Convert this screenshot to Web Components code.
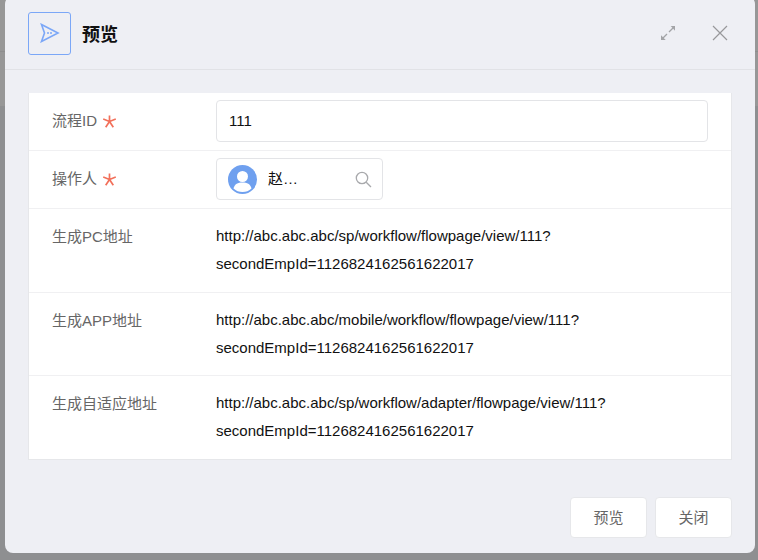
<!DOCTYPE html>
<html lang="zh">
<head>
<meta charset="utf-8">
<title>预览</title>
<style>
  html, body { margin: 0; height: 100%; }
  body {
    background: linear-gradient(#979797 0 51px, #8e8e8e 51px 52px, #979797 52px 106px, #8e8f91 106px);
    overflow: hidden;
    font-family: "Liberation Sans", "Noto Sans CJK SC", sans-serif;
    font-size: 15px;
  }
</style>
</head>
<body>
<preview-dialog heading="预览">
  <form-row label="流程ID" required compact><text-box value="111"></text-box></form-row>
  <form-row label="操作人" required compact><person-picker name="赵…"></person-picker></form-row>
  <form-row label="生成PC地址">http://abc.abc.abc/sp/workflow/flowpage/view/111?<br>secondEmpId=1126824162561622017</form-row>
  <form-row label="生成APP地址">http://abc.abc.abc/mobile/workflow/flowpage/view/111?<br>secondEmpId=1126824162561622017</form-row>
  <form-row label="生成自适应地址" last>http://abc.abc.abc/sp/workflow/adapter/flowpage/view/111?<br>secondEmpId=1126824162561622017</form-row>
  <plain-button slot="footer">预览</plain-button>
  <plain-button slot="footer">关闭</plain-button>
</preview-dialog>

<script>
class PreviewDialog extends HTMLElement {
    constructor() {
        super();
        this.attachShadow({mode: "open"});
        this.shadowRoot.innerHTML = `
            <style>
                :host {
                    position: absolute;
                    left: 5px;
                    top: -4px;
                    width: 750px;
                    height: 557px;
                    display: flex;
                    flex-direction: column;
                    box-sizing: border-box;
                    background: #eeeff4;
                    border-radius: 8px;
                }
                .head {
                    height: 74px;
                    box-sizing: border-box;
                    padding: 1px 23px 0 23px;
                    border-bottom: 1px solid #e1e2e6;
                    display: flex;
                    align-items: center;
                    gap: 11px;
                }
                .logo {
                    width: 43px;
                    height: 43px;
                    box-sizing: border-box;
                    border: 1px solid #7ba7f7;
                    border-radius: 3px;
                    display: flex;
                    align-items: center;
                    justify-content: center;
                }
                h1 {
                    flex: 1;
                    margin: 0;
                    font-size: 18px;
                    font-weight: bold;
                    color: #111;
                }
                .tools { display: flex; align-items: center; gap: 36px; margin-right: 4px; }
                svg { display: block; }
                .card {
                    margin: 23px 23px 0 23px;
                    background: #fff;
                    border: solid #e6e7ea;
                    border-width: 0 1px 1px 1px;
                    display: flex;
                    flex-direction: column;
                }
                .foot {
                    margin-top: 37px;
                    padding-right: 23px;
                    display: flex;
                    justify-content: flex-end;
                    gap: 8px;
                }
            </style>
            <div class="head">
                <div class="logo">
                    <svg width="20" height="20" viewBox="0 0 20 20" fill="none" stroke="#7ba7f7" stroke-width="1.6">
                        <path d="M1.5 1.5 L18 10 L1.5 18.5 L4.5 10 Z"/>
                        <circle cx="8" cy="10" r="1" fill="#7ba7f7" stroke="none"/>
                        <circle cx="11" cy="10" r="1" fill="#7ba7f7" stroke="none"/>
                    </svg>
                </div>
                <h1></h1>
                <div class="tools">
                    <svg width="16" height="16" viewBox="0 0 16 16" fill="none" stroke="#a3a4a7" stroke-width="1.3">
                        <path d="M3 13 L7 9 M9 7 L13 3"/>
                        <path d="M10.7 1 H15 V5.7 Z" fill="#a3a4a7" stroke="none"/>
                        <path d="M1 10.3 V15 H5.7 Z" fill="#a3a4a7" stroke="none"/>
                    </svg>
                    <svg width="16" height="16" viewBox="0 0 16 16" fill="none" stroke="#97989b" stroke-width="1.2">
                        <path d="M1 1 L15 15 M15 1 L1 15"/>
                    </svg>
                </div>
            </div>
            <div class="card"><slot></slot></div>
            <div class="foot"><slot name="footer"></slot></div>
        `;
    }

    connectedCallback() {
        this.shadowRoot.querySelector('h1').textContent = this.getAttribute('heading');
    }
}

class FormRow extends HTMLElement {
    constructor() {
        super();
        this.attachShadow({mode: "open"});
        this.shadowRoot.innerHTML = `
            <style>
                :host {
                    display: flex;
                    box-sizing: border-box;
                    border-bottom: 1px solid #f0f0f2;
                    padding: 13px 23px 13px 23px;
                    color: #111;
                    line-height: 28px;
                    min-height: 83.5px;
                }
                :host([compact]) {
                    align-items: center;
                    height: 58px;
                    min-height: 0;
                    padding-top: 0;
                    padding-bottom: 1px;
                }
                :host([last]) { border-bottom: 0; min-height: 83px; }
                .label { width: 164px; flex: none; color: #666; display: flex; align-items: center; height: 28px; padding-top: 1px; }
                :host([compact]) .label { padding-top: 0; }
                .star { display: block; margin: 1px 0 0 6px; }
                .value { flex: 1; }
            </style>
            <div class="label"><span class="text"></span></div>
            <div class="value"><slot></slot></div>
        `;
    }

    connectedCallback() {
        this.shadowRoot.querySelector('.text').textContent = this.getAttribute('label');
        if (this.hasAttribute('required')) {
            // the red mark is a thin five armed star, not the font's asterisk
            this.shadowRoot.querySelector('.label').insertAdjacentHTML('beforeend', `
                <svg class="star" width="13" height="13" viewBox="0 0 13 13" fill="none" stroke="#f2705a" stroke-width="1.7">
                    <path d="M6.5 6.5 V0.5 M6.5 6.5 L12.8 4 M6.5 6.5 L10.3 12.2 M6.5 6.5 L2.7 12.2 M6.5 6.5 L0.2 4"/>
                </svg>`);
        }
    }
}

class TextBox extends HTMLElement {
    constructor() {
        super();
        this.attachShadow({mode: "open"});
        this.shadowRoot.innerHTML = `
            <style>
                :host {
                    display: flex;
                    align-items: center;
                    box-sizing: border-box;
                    height: 42px;
                    padding: 0 12px;
                    background: #fff;
                    border: 1px solid #e3e4e7;
                    border-radius: 4px;
                    color: #111;
                }
            </style>
            <span></span>
        `;
    }

    connectedCallback() {
        this.shadowRoot.querySelector('span').textContent = this.getAttribute('value');
    }
}

class PersonPicker extends HTMLElement {
    constructor() {
        super();
        this.attachShadow({mode: "open"});
        this.shadowRoot.innerHTML = `
            <style>
                :host {
                    display: flex;
                    align-items: center;
                    box-sizing: border-box;
                    width: 167px;
                    height: 42px;
                    padding: 0 10px 0 11px;
                    border: 1px solid #e3e4e7;
                    border-radius: 4px;
                    color: #111;
                }
                .name { flex: 1; margin-left: 11px; }
                svg { display: block; flex: none; }
            </style>
            <svg width="29" height="29" viewBox="0 0 29 29">
                <circle cx="14.5" cy="14.5" r="14.5" fill="#6fa0ef"/>
                <circle cx="14.5" cy="11.5" r="5.5" fill="#fff"/>
                <path d="M5.5 23.5 C6.5 19 10 17.5 14.5 17.5 C19 17.5 22.5 19 23.5 23.5 C21 26 18 27 14.5 27 C11 27 8 26 5.5 23.5 Z" fill="#fff"/>
            </svg>
            <span class="name"></span>
            <svg width="17" height="17" viewBox="0 0 17 17" fill="none" stroke="#a8a9ac" stroke-width="1.3">
                <circle cx="7" cy="7" r="5.7"/>
                <path d="M11.2 11.2 L16 16"/>
            </svg>
        `;
    }

    connectedCallback() {
        this.shadowRoot.querySelector('.name').textContent = this.getAttribute('name');
    }
}

class PlainButton extends HTMLElement {
    constructor() {
        super();
        this.attachShadow({mode: "open"});
        this.shadowRoot.innerHTML = `
            <style>
                :host {
                    display: flex;
                    align-items: center;
                    justify-content: center;
                    box-sizing: border-box;
                    width: 77px;
                    height: 41px;
                    padding-bottom: 3px;
                    background: #fff;
                    border: 1px solid #e6e7ea;
                    border-radius: 4px;
                    color: #666;
                }
            </style>
            <slot></slot>
        `;
    }
}

customElements.define('preview-dialog', PreviewDialog);
customElements.define('form-row', FormRow);
customElements.define('text-box', TextBox);
customElements.define('person-picker', PersonPicker);
customElements.define('plain-button', PlainButton);
</script>
</body>
</html>
